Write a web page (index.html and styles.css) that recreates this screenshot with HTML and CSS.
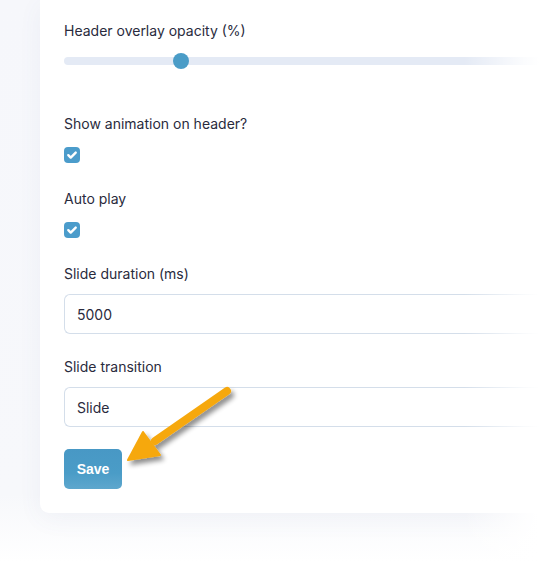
FILE: index.html
```html
<!DOCTYPE html>
<html lang="en">
<head>
<meta charset="utf-8">
<title>Header settings</title>
<link rel="stylesheet" href="styles.css">
</head>
<body>
<div class="page">
  <form class="card">
    <div class="field">
      <label class="label">Header overlay opacity (%)</label>
      <div class="slider">
        <div class="track"></div>
        <div class="thumb"></div>
      </div>
    </div>
    <div class="field field-check first-check">
      <label class="label">Show animation on header?</label>
      <span class="checkbox"><svg viewBox="0 0 16 16" width="16" height="16"><path d="M4.3 8.2l2.4 2.4 5-5" fill="none" stroke="#fff" stroke-width="2.4" stroke-linecap="round" stroke-linejoin="round"/></svg></span>
    </div>
    <div class="field field-check">
      <label class="label">Auto play</label>
      <span class="checkbox"><svg viewBox="0 0 16 16" width="16" height="16"><path d="M4.3 8.2l2.4 2.4 5-5" fill="none" stroke="#fff" stroke-width="2.4" stroke-linecap="round" stroke-linejoin="round"/></svg></span>
    </div>
    <div class="field field-input">
      <label class="label">Slide duration (ms)</label>
      <div class="input">5000</div>
    </div>
    <div class="field field-input second-input">
      <label class="label">Slide transition</label>
      <div class="input">Slide</div>
    </div>
    <button type="button" class="btn">Save</button>
  </form>
  <svg class="arrow" width="140" height="110" viewBox="0 0 140 110">
    <defs>
      <filter id="sh" x="-30%" y="-30%" width="160%" height="160%">
        <feGaussianBlur in="SourceAlpha" stdDeviation="2.5"/>
        <feOffset dx="3" dy="4" result="b"/>
        <feComponentTransfer><feFuncA type="linear" slope="0.45"/></feComponentTransfer>
        <feMerge><feMergeNode/><feMergeNode in="SourceGraphic"/></feMerge>
      </filter>
    </defs>
    <g filter="url(#sh)">
      <line x1="127" y1="11" x2="55" y2="61" stroke="#f6a80c" stroke-width="8" stroke-linecap="round"/>
      <path d="M28 80 L43 52 L60 75 Z" fill="#f6a80c" stroke="#f6a80c" stroke-width="2" stroke-linejoin="round"/>
    </g>
  </svg>
  <div class="fade"></div>
</div>
</body>
</html>
```
FILE: styles.css
```css
* { box-sizing: border-box; }
html, body { margin: 0; height: 100%; }
body {
  background: linear-gradient(to bottom, #f6f7fb 0%, #f7f8fb 88%, #ffffff 100%);
  font-family: "Inter", "Liberation Sans", sans-serif;
  color: #2a2b3d;
  overflow: hidden;
}
.page {
  position: relative;
  padding-left: 40px;
  height: 562px;
}
.card {
  background: #fff;
  width: 100%;
  border-radius: 0 0 0 9px;
  padding: 21px 0 24px 24px;
  display: flex;
  flex-direction: column;
  align-items: flex-start;
  box-shadow: 0 6px 24px rgba(90, 110, 150, 0.06);
}
.field { display: flex; flex-direction: column; align-items: stretch; width: 100%; }
.label {
  font-size: 14px;
  line-height: 20px;
  color: #2a2b3d;
}
.slider {
  position: relative;
  height: 16px;
  margin-top: 12px;
}
.track {
  position: absolute;
  left: 0; right: 0; top: 4px;
  height: 8px;
  border-radius: 4px 0 0 4px;
  background: #e4eaf5;
}
.thumb {
  position: absolute;
  left: 109px; top: 0;
  width: 16px; height: 16px;
  border-radius: 50%;
  background: #4a9cc7;
}
.field-check { align-items: flex-start; margin-top: 26px; }
.first-check { margin-top: 45px; }
.checkbox {
  margin-top: 13px;
  width: 16px; height: 16px;
  border-radius: 4px;
  background: #4b9ccb;
  display: flex;
}
.field-input { margin-top: 26px; }
.second-input { margin-top: 23px; }
.input {
  margin-top: 10px;
  height: 40px;
  border: 1px solid #d4deea;
  border-right: 0;
  border-radius: 6px 0 0 6px;
  padding: 0 12px;
  display: flex;
  align-items: center;
  font-size: 14px;
  color: #2a2b3d;
}
.btn {
  margin-top: 22px;
  width: 58px; height: 40px;
  border: 0;
  border-radius: 5px;
  background: linear-gradient(to bottom, #4898c5 0%, #4a9cc7 60%, #5ea7cd 100%);
  color: #fff;
  font-family: "Liberation Sans", "Inter", sans-serif;
  font-weight: 700;
  font-size: 14px;
  padding: 0;
}
.arrow {
  position: absolute;
  left: 100px; top: 380px;
}
.fade {
  position: absolute;
  top: 0; right: 0;
  width: 75px; height: 100%;
  background: linear-gradient(to right, rgba(255,255,255,0) 0%, rgba(255,255,255,0.85) 80%, #fff 100%);
  pointer-events: none;
}
```
